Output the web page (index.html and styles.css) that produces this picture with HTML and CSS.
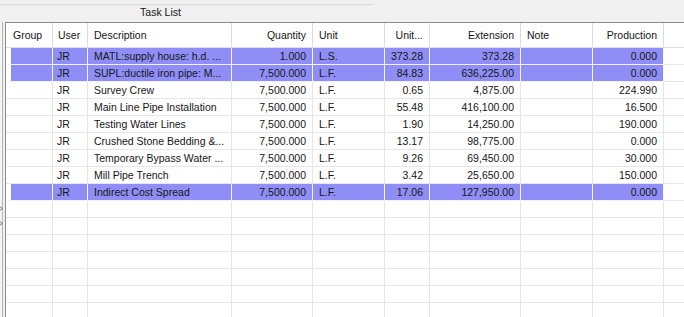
FILE: index.html
```html
<!DOCTYPE html>
<html>
<head>
<meta charset="utf-8">
<link rel="stylesheet" href="styles.css">
</head>
<body>
<div class="app">
  <div class="titlebar">
    <div class="rule"></div>
    <div class="title">Task List</div>
  </div>
  <div class="main">
    <div class="strip">
      <svg class="chev first" width="3" height="5" viewBox="0 0 3 5"><path d="M0 0.5 L2 2.5 L0 4.5" fill="none" stroke="#555" stroke-width="1"/></svg>
      <svg class="chev" width="3" height="5" viewBox="0 0 3 5"><path d="M0 0.5 L2 2.5 L0 4.5" fill="none" stroke="#555" stroke-width="1"/></svg>
    </div>
    <div class="grid">
      <div class="row head">
        <div class="c g">Group</div><div class="c u">User</div><div class="c d">Description</div><div class="c r">Quantity</div><div class="c un">Unit</div><div class="c r">Unit...</div><div class="c r">Extension</div><div class="c n">Note</div><div class="c r">Production</div><div class="f"></div>
      </div>
      <div class="row sel">
        <div class="c g"></div><div class="c u">JR</div><div class="c d">MATL:supply house: h.d. ...</div><div class="c r">1.000</div><div class="c un">L.S.</div><div class="c r">373.28</div><div class="c r">373.28</div><div class="c n"></div><div class="c r">0.000</div><div class="f"></div>
      </div>
      <div class="row sel">
        <div class="c g"></div><div class="c u">JR</div><div class="c d">SUPL:ductile iron pipe: M...</div><div class="c r">7,500.000</div><div class="c un">L.F.</div><div class="c r">84.83</div><div class="c r">636,225.00</div><div class="c n"></div><div class="c r">0.000</div><div class="f"></div>
      </div>
      <div class="row">
        <div class="c g"></div><div class="c u">JR</div><div class="c d">Survey Crew</div><div class="c r">7,500.000</div><div class="c un">L.F.</div><div class="c r">0.65</div><div class="c r">4,875.00</div><div class="c n"></div><div class="c r">224.990</div><div class="f"></div>
      </div>
      <div class="row">
        <div class="c g"></div><div class="c u">JR</div><div class="c d">Main Line Pipe Installation</div><div class="c r">7,500.000</div><div class="c un">L.F.</div><div class="c r">55.48</div><div class="c r">416,100.00</div><div class="c n"></div><div class="c r">16.500</div><div class="f"></div>
      </div>
      <div class="row">
        <div class="c g"></div><div class="c u">JR</div><div class="c d">Testing Water Lines</div><div class="c r">7,500.000</div><div class="c un">L.F.</div><div class="c r">1.90</div><div class="c r">14,250.00</div><div class="c n"></div><div class="c r">190.000</div><div class="f"></div>
      </div>
      <div class="row">
        <div class="c g"></div><div class="c u">JR</div><div class="c d">Crushed Stone Bedding &amp;...</div><div class="c r">7,500.000</div><div class="c un">L.F.</div><div class="c r">13.17</div><div class="c r">98,775.00</div><div class="c n"></div><div class="c r">0.000</div><div class="f"></div>
      </div>
      <div class="row">
        <div class="c g"></div><div class="c u">JR</div><div class="c d">Temporary Bypass Water ...</div><div class="c r">7,500.000</div><div class="c un">L.F.</div><div class="c r">9.26</div><div class="c r">69,450.00</div><div class="c n"></div><div class="c r">30.000</div><div class="f"></div>
      </div>
      <div class="row">
        <div class="c g"></div><div class="c u">JR</div><div class="c d">Mill Pipe Trench</div><div class="c r">7,500.000</div><div class="c un">L.F.</div><div class="c r">3.42</div><div class="c r">25,650.00</div><div class="c n"></div><div class="c r">150.000</div><div class="f"></div>
      </div>
      <div class="row sel">
        <div class="c g"></div><div class="c u">JR</div><div class="c d">Indirect Cost Spread</div><div class="c r">7,500.000</div><div class="c un">L.F.</div><div class="c r">17.06</div><div class="c r">127,950.00</div><div class="c n"></div><div class="c r">0.000</div><div class="f"></div>
      </div>
      <div class="row"><div class="c"></div><div class="c"></div><div class="c"></div><div class="c"></div><div class="c"></div><div class="c"></div><div class="c"></div><div class="c"></div><div class="c"></div><div class="f"></div></div>
      <div class="row"><div class="c"></div><div class="c"></div><div class="c"></div><div class="c"></div><div class="c"></div><div class="c"></div><div class="c"></div><div class="c"></div><div class="c"></div><div class="f"></div></div>
      <div class="row"><div class="c"></div><div class="c"></div><div class="c"></div><div class="c"></div><div class="c"></div><div class="c"></div><div class="c"></div><div class="c"></div><div class="c"></div><div class="f"></div></div>
      <div class="row"><div class="c"></div><div class="c"></div><div class="c"></div><div class="c"></div><div class="c"></div><div class="c"></div><div class="c"></div><div class="c"></div><div class="c"></div><div class="f"></div></div>
      <div class="row"><div class="c"></div><div class="c"></div><div class="c"></div><div class="c"></div><div class="c"></div><div class="c"></div><div class="c"></div><div class="c"></div><div class="c"></div><div class="f"></div></div>
      <div class="row"><div class="c"></div><div class="c"></div><div class="c"></div><div class="c"></div><div class="c"></div><div class="c"></div><div class="c"></div><div class="c"></div><div class="c"></div><div class="f"></div></div>
      <div class="row"><div class="c"></div><div class="c"></div><div class="c"></div><div class="c"></div><div class="c"></div><div class="c"></div><div class="c"></div><div class="c"></div><div class="c"></div><div class="f"></div></div>
    </div>
  </div>
</div>
</body>
</html>
```
FILE: styles.css
```css
* { box-sizing: border-box; }
html, body { margin: 0; padding: 0; }
body {
  width: 684px;
  height: 317px;
  overflow: hidden;
  background: #f0f0f0;
  font-family: "Liberation Sans", Arial, sans-serif;
  font-size: 10.5px;
  color: #161616;
}
.app { display: flex; flex-direction: column; height: 317px; }
.titlebar { height: 22px; display: flex; flex-direction: column; flex: none; }
.rule { margin-top: 4px; width: 373px; height: 1px; background: #d9d9d9; }
.title { width: 321px; text-align: center; line-height: 13px; padding-top: 1px; }
.main { flex: 1; display: flex; min-height: 0; }
.strip {
  width: 5px;
  flex: none;
  display: flex;
  flex-direction: column;
  background: linear-gradient(to right, #f4f4f4 2px, #b4b4b4 2px, #b4b4b4 3px, #f0f0f0 3px);
}
.chev { display: block; }
.chev.first { margin-top: 184px; }
.chev + .chev { margin-top: 10px; }
.grid {
  flex: 1;
  min-width: 0;
  border-left: 1px solid #8c8c8c;
  border-top: 1px solid #8c8c8c;
  background: #fff;
  overflow: hidden;
}
.row {
  display: grid;
  grid-template-columns: 47px 35px 144px 81px 72px 45px 91px 72px 71px 1fr;
  height: 17px;
}
.c {
  border-right: 1px solid #e6e6e6;
  border-bottom: 1px solid #e6e6e6;
  padding: 0 6px 0 5px;
  line-height: 16px;
  white-space: nowrap;
  overflow: hidden;
}
.f { border-bottom: 1px solid #e6e6e6; }
.r { text-align: right; padding-right: 6px; }
.g { padding-left: 7px; }
.u { padding-left: 4px; }
.d, .un, .n { padding-left: 6px; }
.head { height: 25px; }
.head .c { line-height: 24px; border-right-color: #dcdcdc; border-bottom-color: #e0e0e0; }
.head .u { padding-left: 5px; }
.head .f { border-bottom-color: #e0e0e0; }
.sel .c { background: #8e8ef6; border-right-color: #f6f6ff; border-bottom-color: #f2f2fc; }
.sel .g { background: linear-gradient(to right, #fff 5px, #8e8ef6 5px); }
```
